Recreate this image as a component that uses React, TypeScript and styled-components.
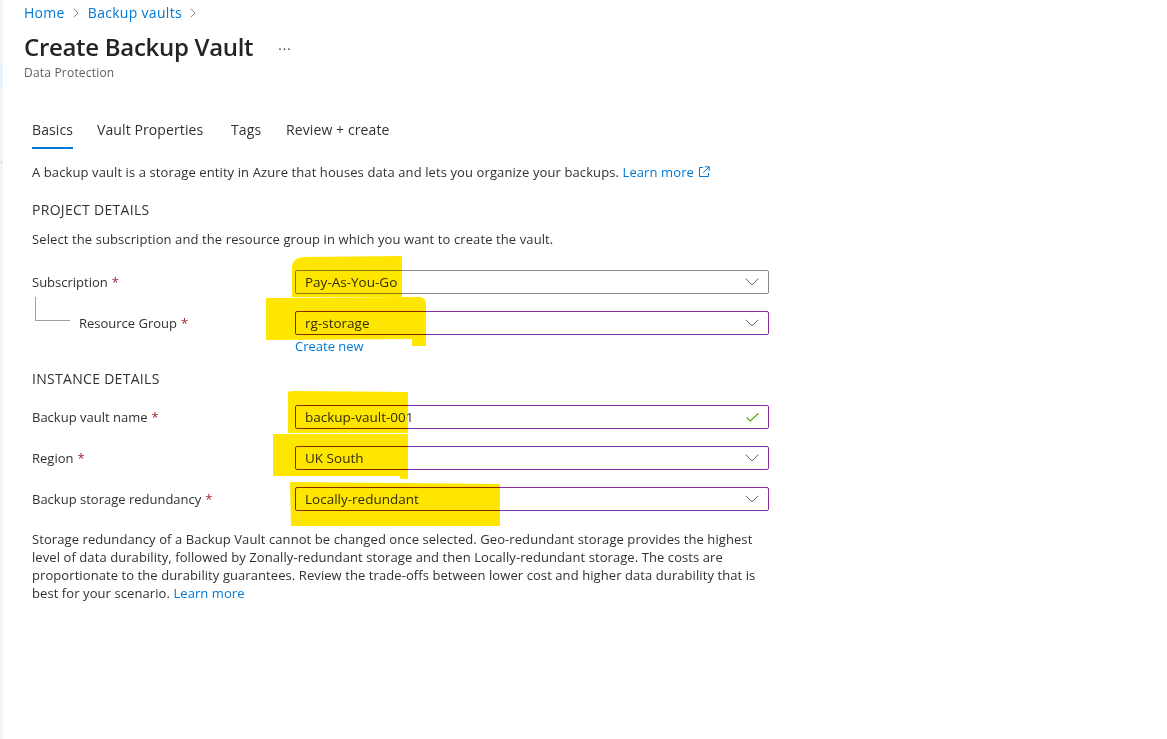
import React from "react";
import styled, { createGlobalStyle } from "styled-components";

const GlobalStyle = createGlobalStyle`
  html, body { margin: 0; padding: 0; background: #ffffff; }
  body {
    font-family: "Open Sans", "Noto Sans", sans-serif;
    color: #323130;
  }
  * { box-sizing: border-box; }
`;

const Page = styled.div`
  position: relative;
  display: flex;
  width: 1167px;
  min-height: 739px;
  background: #ffffff;
`;

const Rail = styled.div`
  flex: none;
  width: 3px;
  background: linear-gradient(
    #f5f5f5 0 60px,
    #eaf2fa 60px 90px,
    #f5f5f5 90px 162px,
    #dcdcdc 162px 163px,
    #f5f5f5 163px
  );
`;

const Main = styled.main`
  flex: 1;
  padding-left: 21px;
`;

const Breadcrumb = styled.nav`
  display: flex;
  align-items: center;
  height: 23px;
  padding-top: 3px;
  font-size: 14px;
  line-height: 20px;
  letter-spacing: 0.3px;
`;

const Crumb = styled.a`
  color: #0078d4;
  text-decoration: none;
`;

const CrumbSep = styled.span`
  display: inline-flex;
  width: 23px;
  justify-content: center;
`;

const TitleRow = styled.div`
  display: flex;
  align-items: center;
  margin-top: 8px;
  height: 32px;
  gap: 25px;
`;

const Title = styled.h1`
  margin: 0;
  font-size: 24px;
  line-height: 32px;
  font-weight: 600;
  color: #252423;
  letter-spacing: -0.3px;
`;

const More = styled.span`
  font-size: 13px;
  color: #323130;
  letter-spacing: 1px;
  margin-top: -4px;
`;

const Subtitle = styled.div`
  margin-top: 2px;
  font-size: 12px;
  line-height: 16px;
  color: #605e5c;
  letter-spacing: 0.2px;
`;

const Content = styled.div`
  padding-left: 8px;
`;

const Tabs = styled.div`
  display: flex;
  margin-top: 32px;
  height: 36px;
`;

const Tab = styled.div<{ $w?: number }>`
  flex: none;
  width: ${(p) => (p.$w ? `${p.$w}px` : "auto")};
  display: flex;
`;

const TabLabel = styled.span<{ $active?: boolean }>`
  padding-top: 7px;
  padding-bottom: 7px;
  font-size: 14px;
  line-height: 20px;
  letter-spacing: 0.1px;
  color: #323130;
  border-bottom: 2px solid ${(p) => (p.$active ? "#0078d4" : "transparent")};
`;

const Text = styled.p<{ $mt: number }>`
  margin: ${(p) => p.$mt}px 0 0;
  font-size: 13px;
  line-height: 18px;
  letter-spacing: 0.1px;
  color: #323130;
`;

const Link = styled.a`
  color: #0078d4;
  text-decoration: none;
`;

const SectionTitle = styled.h2<{ $mt: number }>`
  margin: ${(p) => p.$mt}px 0 0;
  font-size: 14px;
  line-height: 20px;
  font-weight: 400;
  letter-spacing: 0.3px;
  color: #323130;
`;

const Row = styled.div<{ $mt: number }>`
  display: grid;
  grid-template-columns: 263px 474px;
  align-items: center;
  height: 24px;
  margin-top: ${(p) => p.$mt}px;
`;

const Label = styled.div<{ $indent?: boolean }>`
  display: flex;
  align-items: center;
  height: 24px;
  padding-left: ${(p) => (p.$indent ? "3px" : "0")};
  font-size: 13px;
  color: #323130;
`;

const Required = styled.span`
  color: #a4262c;
  margin-left: 4px;
`;

const Connector = styled.span`
  flex: none;
  align-self: flex-start;
  width: 35px;
  height: 24px;
  margin-top: -14px;
  margin-right: 9px;
  border-left: 1px solid #a19f9d;
  border-bottom: 1px solid #a19f9d;
`;

const Field = styled.div<{ $border: string }>`
  display: flex;
  align-items: center;
  justify-content: space-between;
  height: 24px;
  padding: 0 9px 0 9px;
  border: 1px solid ${(p) => p.$border};
  border-radius: 2px;
  background: #ffffff;
  font-size: 13.5px;
  color: #323130;
`;

const UnderLink = styled.div`
  display: grid;
  grid-template-columns: 263px 474px;
  height: 18px;
  margin-top: 2px;
  font-size: 13px;
  line-height: 18px;
`;

const Note = styled.p`
  margin: 19px 0 0;
  width: 760px;
  font-size: 13px;
  line-height: 18px;
  color: #323130;
  letter-spacing: 0.08px;
`;

const Highlights = styled.svg`
  position: absolute;
  left: 0;
  top: 0;
  width: 1167px;
  height: 739px;
  pointer-events: none;
  mix-blend-mode: multiply;
`;

const Chevron = () => (
  <svg width="14" height="8" viewBox="0 0 14 8" fill="none">
    <path d="M0.8 0.8 L7 6.8 L13.2 0.8" stroke="#605e5c" strokeWidth="1" />
  </svg>
);

const Check = () => (
  <svg width="13" height="9" viewBox="0 0 13 9" fill="none">
    <path d="M0.7 4.3 L4.3 7.9 L12.3 0.5" stroke="#57a300" strokeWidth="1.2" />
  </svg>
);

const CrumbChevron = () => (
  <svg width="6" height="10" viewBox="0 0 6 10" fill="none">
    <path d="M0.8 0.8 L5 5 L0.8 9.2" stroke="#8a8886" strokeWidth="1" />
  </svg>
);

const ExternalIcon = () => (
  <svg width="12" height="12" viewBox="0 0 12 12" fill="none" style={{ marginLeft: 4, verticalAlign: "-1px" }}>
    <path d="M5 1.5 H1.5 V10.5 H10.5 V7" stroke="#0078d4" strokeWidth="1" />
    <path d="M7 0.8 H11.2 V5" stroke="#0078d4" strokeWidth="1" />
    <path d="M11.2 0.8 L5.2 6.8" stroke="#0078d4" strokeWidth="1" />
  </svg>
);

type FieldRow = {
  label: string;
  value: string;
  border: string;
  icon: "chevron" | "check";
  mt: number;
  indent?: boolean;
};

const projectRows: FieldRow[] = [
  { label: "Subscription", value: "Pay-As-You-Go", border: "#8a8886", icon: "chevron", mt: 22 },
  { label: "Resource Group", value: "rg-storage", border: "#8a2da5", icon: "chevron", mt: 17, indent: true },
];

const instanceRows: FieldRow[] = [
  { label: "Backup vault name", value: "backup-vault-001", border: "#8a2da5", icon: "check", mt: 16 },
  { label: "Region", value: "UK South", border: "#8a2da5", icon: "chevron", mt: 17 },
  { label: "Backup storage redundancy", value: "Locally-redundant", border: "#8a2da5", icon: "chevron", mt: 17 },
];

const FormRow = ({ row }: { row: FieldRow }) => (
  <Row $mt={row.mt}>
    <Label $indent={row.indent}>
      {row.indent && <Connector />}
      {row.label}
      <Required>*</Required>
    </Label>
    <Field $border={row.border}>
      <span>{row.value}</span>
      {row.icon === "chevron" ? <Chevron /> : <Check />}
    </Field>
  </Row>
);

export default function App() {
  return (
    <>
      <GlobalStyle />
      <Page>
        <Rail />
        <Main>
          <Breadcrumb>
            <Crumb>Home</Crumb>
            <CrumbSep>
              <CrumbChevron />
            </CrumbSep>
            <Crumb>Backup vaults</Crumb>
            <CrumbSep>
              <CrumbChevron />
            </CrumbSep>
          </Breadcrumb>
          <TitleRow>
            <Title>Create Backup Vault</Title>
            <More>...</More>
          </TitleRow>
          <Subtitle>Data Protection</Subtitle>
          <Content>
            <Tabs>
              <Tab $w={65}>
                <TabLabel $active>Basics</TabLabel>
              </Tab>
              <Tab $w={134}>
                <TabLabel>Vault Properties</TabLabel>
              </Tab>
              <Tab $w={55}>
                <TabLabel>Tags</TabLabel>
              </Tab>
              <Tab>
                <TabLabel>Review + create</TabLabel>
              </Tab>
            </Tabs>
            <Text $mt={14}>
              A backup vault is a storage entity in Azure that houses data and lets you organize your backups.{" "}
              <Link>
                Learn more
                <ExternalIcon />
              </Link>
            </Text>
            <SectionTitle $mt={19}>PROJECT DETAILS</SectionTitle>
            <Text $mt={10}>Select the subscription and the resource group in which you want to create the vault.</Text>
            {projectRows.map((r) => (
              <FormRow key={r.label} row={r} />
            ))}
            <UnderLink>
              <span />
              <Link>Create new</Link>
            </UnderLink>
            <SectionTitle $mt={14}>INSTANCE DETAILS</SectionTitle>
            {instanceRows.map((r) => (
              <FormRow key={r.label} row={r} />
            ))}
            <Note>
              Storage redundancy of a Backup Vault cannot be changed once selected. Geo-redundant storage provides the highest
              <br />
              level of data durability, followed by Zonally-redundant storage and then Locally-redundant storage. The costs are
              <br />
              proportionate to the durability guarantees. Review the trade-offs between lower cost and higher data durability that is
              <br />
              best for your scenario. <Link>Learn more</Link>
            </Note>
          </Content>
        </Main>
        <Highlights viewBox="0 0 1167 739">
          <g fill="#ffe600">
            <path d="M292 266 Q293 258 303 257 L402 256 L402 297 L292 297 Z" />
            <path d="M266 298 L420 297 Q426 298 426 304 L426 346 L412 346 L412 339 L266 340 Z" />
            <path d="M288 392 Q289 391 296 391 L408 392 L408 433 L288 433 Z" />
            <path d="M273 434 L408 434 L408 479 L400 479 L400 476 L273 476 Z" />
            <path d="M290 482 L500 484 L500 526 L291 526 Z" />
          </g>
        </Highlights>
      </Page>
    </>
  );
}
